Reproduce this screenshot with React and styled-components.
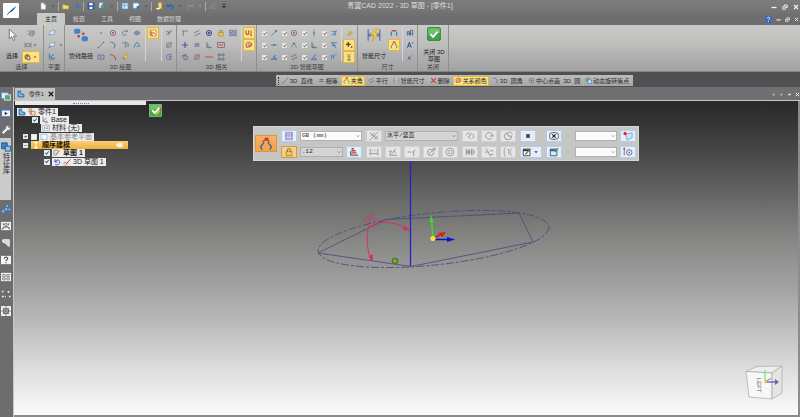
import { useState } from "react";
import styled, { createGlobalStyle } from "styled-components";

const GlobalStyle = createGlobalStyle`
  * {
    box-sizing: border-box;
  }
  body {
    margin: 0;
    background: #707072;
    font-family: "Liberation Sans", "Noto Sans CJK SC", sans-serif;
    font-size: 6px;
    line-height: 8px;
    color: #2c2c2c;
  }
  button,
  input,
  select {
    font: inherit;
    color: inherit;
    margin: 0;
    padding: 0;
  }
  button {
    border: 0;
    background: transparent;
    cursor: pointer;
    white-space: nowrap;
  }
`;

const navy = "#4a5c9c";
const blue = "#2f74c0";
const red = "#c8382c";
const gray = "#6c6c70";
const off = "#8a8a8a";

// every icon is drawn on a 12 x 12 grid
const icons = {
  caret: <path d="M3.5 5h5L6 8z" fill="#444" stroke="none" />,
  caretLight: <path d="M3.5 5h5L6 8z" fill="#aaa" stroke="none" />,
  navLeft: <path d="M8 1.5v9L3 6z" fill="#b8b8b8" stroke="none" />,
  navRight: <path d="M4 1.5v9L9 6z" fill="#b8b8b8" stroke="none" />,
  navDown: <path d="M1.5 4h9L6 9z" fill="#e8e8e8" stroke="none" />,
  chevron: <path d="M3 4.5l3 3 3-3" stroke="#555" />,
  more: (
    <>
      <path d="M3 3.5h6" stroke="#222" />
      <path d="M3 6h6L6 9z" fill="#222" stroke="none" />
    </>
  ),
  feather: (
    <>
      <path d="M1 11C3 7 7 4 11 1 9.5 5 7 7.5 4 8.2z" fill={blue} stroke="none" />
      <path d="M1 11l5-5" stroke="#123f7a" strokeWidth=".6" />
    </>
  ),
  page: <path d="M3 1.5h4.5L10 4v7H3zM7.5 1.5V4H10" fill="#fff" stroke="#9fb8d8" />,
  folder: (
    <>
      <path d="M1 4h3l1 1h5v5.5H1z" fill="#f3d878" stroke="#c59a32" />
      <path d="M5 3c2-2 4-1 5 1M10 1.5V4H7.5" stroke="#3b9b38" />
    </>
  ),
  share: <path d="M3 6h3l3-3M6 6l3 3" stroke={blue} strokeWidth="1.8" />,
  save: (
    <>
      <path d="M1.5 1.5h9v9h-9z" fill="#3668c4" stroke="#2c4b96" />
      <path d="M3.5 1.5h5V5h-5zM4 7.5h4v3H4z" fill="#fff" stroke="none" />
    </>
  ),
  copy: (
    <>
      <path d="M1.5 1h6v8h-6z" fill="#e6effa" stroke="#6c93cc" />
      <circle cx="8" cy="7" r="3" fill="#58a15a" stroke="#2f74c0" />
    </>
  ),
  layout: (
    <>
      <path d="M1.5 1.5h9v9h-9z" fill="#d8eafb" stroke="#5c93d0" />
      <path d="M1.5 5h9M5 1.5v9" stroke="#5c93d0" />
    </>
  ),
  screen: (
    <>
      <path d="M1.5 1.5h9v8h-9z" fill="#f1f8ff" stroke="#5c93d0" />
      <path d="M7 6h4v5H7z" fill={blue} stroke="none" />
    </>
  ),
  brush: (
    <>
      <path d="M5 1h5v9H5z" fill="#f6dd7c" stroke="#cba53c" />
      <path d="M2 10h5" stroke="#fff" strokeWidth="2" />
    </>
  ),
  undo: (
    <>
      <path d="M9 11c3-5-1-8-5-5" stroke="#2b68bd" strokeWidth="2.4" />
      <path d="M1 2v6h6z" fill="#2b68bd" stroke="none" />
    </>
  ),
  redo: (
    <>
      <path d="M3 11C0 6 4 3 8 6" stroke="#8d8d8f" strokeWidth="2" />
      <path d="M11 2v6H5z" fill="#8d8d8f" stroke="none" />
    </>
  ),
  pen: <path d="M2 10l2-5 4-3 2 2-3 4zM6 10h4" stroke="#949496" />,
  minimize: <path d="M1 7h10" stroke="#f4f4f4" strokeWidth="2.6" />,
  restore: <path d="M1.5 5.5h5.5v5H1.500zM4.5 4.500V2h6v5H8" stroke="#f4f4f4" strokeWidth="1.8" />,
  close: <path d="M2 2l8 8M10 2l-8 8" stroke="#f4f4f4" strokeWidth="2.2" />,
  closeDark: <path d="M1.5 1.5l9 9M10.5 1.5l-9 9" stroke="#161616" strokeWidth="2.4" />,
  help: (
    <>
      <path d="M1 0h10v12H1z" fill="#2f6bc4" stroke="none" />
      <path d="M4 4c0-2.5 4.500-2.500 4 0-.2 1.500-2 1.500-2 3.200M6 9v1.400" stroke="#fff" strokeWidth="1.5" />
    </>
  ),
  cursor: (
    <path d="M3 1v9l2.200-2 1.600 3.500 1.500-.7L6.700 7.500h3z" fill="#fff" stroke="#666" strokeWidth=".8" />
  ),
  frame: <path d="M1 3h8v5H4M1 8h3V5h5M4 10.500h5l2-3V3H9" stroke={gray} />,
  extent: <path d="M1.500 2v8M10.500 2v8M1.500 6H4m0-2h5v4H4z" stroke={gray} />,
  pick: (
    <>
      <path d="M1.500 4l3-2 4 2v5l-3 1-4-2z" fill="#c98f5a" stroke="#6f4420" />
      <path d="M5 4v6l2-1 1 2 1-.5-1-2h2z" fill="#fff" stroke="#333" strokeWidth=".7" />
    </>
  ),
  plane: <path d="M1.500 9l2-6 7-1-2 6z" fill="#dcebfa" stroke="#5f93cc" />,
  planeRed: (
    <>
      <path d="M1.500 8l2-5 7-1-2 6z" fill="#dcebfa" stroke="#5f93cc" />
      <path d="M1 10.500l4-3" stroke={red} />
    </>
  ),
  axes: (
    <>
      <path d="M2 1v8l3 2M2 5h3M9 2L5 5v3h6" stroke={blue} strokeWidth="1.3" />
      <path d="M5 8l4 3" stroke={red} />
    </>
  ),
  pipe: (
    <>
      <path d="M3 3.500h4.500v3h-3V9H9" stroke="#b9c0c9" strokeWidth="1.800" />
      <rect x=".5" y="1" width="4.5" height="3.5" rx="1" fill="#3f86d6" stroke="#1e5ea8" strokeWidth=".5" />
      <rect x="7" y="7.5" width="4.5" height="3.5" rx="1" fill="#3f86d6" stroke="#1e5ea8" strokeWidth=".5" />
      <circle cx="4" cy="7" r="1.1" fill={red} stroke="none" />
      <circle cx="8" cy="5" r="1.1" fill={red} stroke="none" />
    </>
  ),
  point: <circle cx="6" cy="6" r="1.2" fill={navy} stroke="none" />,
  circle: (
    <>
      <circle cx="6" cy="6" r="4" />
      <circle cx="6" cy="6" r="1.4" fill={red} stroke="none" />
    </>
  ),
  hook: <path d="M10 3H5C1 3 1 9 5 9h3M8 1.500L10 3 8 5" />,
  mirror: <path d="M6 2v8M4.500 3.500L1.500 6l3 2.500zM7.500 3.500l3 2.500-3 2.500z" />,
  line: (
    <>
      <path d="M2.500 9.500l7-7" stroke={red} />
      <path d="M1.500 10.500l1-1M9.500 2.500l1-1" stroke={navy} strokeWidth="2" />
    </>
  ),
  arc: <path d="M2 2c6-1 9 4 5 9" strokeWidth="1.200" />,
  arcs: <path d="M2 3c4-1 7 3 4 7M6 2c5 0 6 5 4 7" strokeWidth="1.200" />,
  curve: (
    <>
      <path d="M1.500 10c2-7 4-9 6-7 2 2 1 5 3 6" stroke={blue} strokeWidth="1.300" />
      <path d="M4 8h5" stroke="#58a15a" strokeWidth="1.300" />
    </>
  ),
  rect: (
    <>
      <path d="M1.500 3h9v6h-9z" />
      <circle cx="6" cy="6" r="1.2" fill={red} stroke="none" />
    </>
  ),
  arcRed: <path d="M2 2.500c5 0 7 3 8 8" stroke={red} strokeWidth="1.500" />,
  bulb: (
    <>
      <path d="M4 9l1-5 4-2 1 3-4 4z" fill="#f2cf5b" stroke="#a98522" />
      <path d="M2 7l3 3" stroke="#555" />
    </>
  ),
  sketch: (
    <>
      <path d="M1.500 1.500h9v9h-9z" fill="#fff3d0" stroke="#b86a2c" />
      <path d="M3 3v6h3M3 6h3M6 4l3 4" stroke={red} strokeWidth="1.300" />
    </>
  ),
  trim: <path d="M2 9l8-6M2 4h3l2 5M8 2v3" stroke="#555a70" />,
  noCircle: (
    <>
      <circle cx="6" cy="6" r="3.500" />
      <path d="M1.500 10.500l9-9" stroke={red} />
    </>
  ),
  offset: <path d="M10 2.500H5c-4 0-4 7 0 7h5M10 5H6.500v2H10" />,
  corner: <path d="M3.500 10V3H10M1.500 3h2" />,
  parallel: <path d="M1.500 6l8-4M3 10l8-4" stroke="#555a70" />,
  target: (
    <>
      <circle cx="6" cy="6" r="4" strokeWidth="1.500" />
      <circle cx="6" cy="6" r="1.800" fill={navy} />
    </>
  ),
  lock: (
    <>
      <path d="M4 6V4c0-2.500 4-2.500 4 0v2" stroke="#8a7440" strokeWidth="1.300" />
      <path d="M2.500 5.500h7v5h-7z" fill="#efc95a" stroke="#a8842c" />
    </>
  ),
  grid: <path d="M1 2h4v3H1zM7 2h4v3H7zM1 7h4v3H1zM7 7h4v3H7z" />,
  plus: <path d="M6 1.500v9M1.500 6h9" strokeWidth="1.800" />,
  equal: <path d="M2.500 4.500h7M2.500 7.500h7" strokeWidth="1.500" />,
  perp: (
    <>
      <path d="M3 2v8h7" stroke="#444" />
      <path d="M3 6c2 0 4 2 4 4" stroke={blue} />
    </>
  ),
  group: (
    <>
      <path d="M1 2.500h10v7H1z" stroke="#5a3d3d" fill="#d8c8c8" />
      <path d="M3 6h6" stroke={red} strokeWidth="1.500" />
    </>
  ),
  tangent: (
    <>
      <circle cx="7" cy="7" r="3.200" />
      <path d="M1 5l7-3" stroke="#444" />
      <circle cx="7" cy="7" r="1.200" fill="#58a15a" stroke="none" />
    </>
  ),
  dash: <path d="M0 6h12" stroke={red} strokeWidth="1.300" />,
  linked: (
    <>
      <path d="M2 1.500h3v3H2zM7.500 7.500h3v3h-3zM2 7.500h3v3H2zM7.500 1.500h3v3h-3z" />
      <path d="M4.500 6h4" stroke="#e2b72d" strokeWidth="2.500" />
    </>
  ),
  magnet: (
    <>
      <path d="M1.500 2v6h4V2" stroke="#a5501e" strokeWidth="1.500" />
      <path d="M9 2v7M7.500 9.500h3" stroke={red} strokeWidth="1.300" />
    </>
  ),
  relation: (
    <>
      <path d="M2 9.500V4c0-2 6-3 8 0 1 3-2 5-5 5z" stroke={red} strokeWidth="1.300" />
      <circle cx="6.500" cy="6" r="1.800" stroke={navy} />
    </>
  ),
  diag: (
    <>
      <path d="M2 10l6-6" stroke={blue} />
      <path d="M8 4l2-2" stroke={blue} strokeWidth="2.500" />
    </>
  ),
  vert: (
    <>
      <path d="M6 1v10" stroke={blue} />
      <circle cx="6" cy="6" r="1.300" fill={blue} stroke="none" />
    </>
  ),
  cross: <path d="M2 10l8-8M2 4c4-2 8 0 6 6M6 4h4M4 8h5" stroke={blue} />,
  horiz: (
    <>
      <path d="M1 6h10" stroke={blue} />
      <circle cx="6" cy="6" r="1.500" fill={blue} stroke="none" />
    </>
  ),
  peak: (
    <>
      <path d="M2 9.500c2 0 2-6 4-6s2 6 4 6" stroke={blue} />
      <circle cx="6" cy="3.500" r="1.300" fill={red} stroke="none" />
    </>
  ),
  tee: <path d="M1.500 2.500h9M3 3c0 3 2 4 6 4M6 3v4l3 4M3 7h3" stroke={blue} />,
  slope: <path d="M1.500 9.500h9M4 8l5-5M6 4v4h4" stroke={blue} strokeWidth="1.300" />,
  angle: <path d="M9 2L2 10h8M6 6c2 0 2 2 2 4" stroke={blue} strokeWidth="1.300" />,
  wave: <path d="M2 9.500V4c2-2 4-1 3 4 2-6 4-6 5-6" stroke={blue} />,
  dots: (
    <>
      <circle cx="4" cy="4" r="1.700" fill="#e2d534" stroke="none" />
      <circle cx="8.500" cy="6" r="2" fill="#e2d534" stroke="#98922a" />
      <path d="M4 8l3 2" stroke={navy} />
    </>
  ),
  plusDot: <path d="M5 1.500v7M1.500 5h7M9 9h2" stroke="#5a3b10" strokeWidth="1.900" />,
  spark: (
    <>
      <path d="M6 5v5M3 10.500h6" stroke="#58852a" strokeWidth="1.400" />
      <path d="M3 1.500l6 5M9 1.500l-6 5" stroke="#c0602c" />
    </>
  ),
  smart: (
    <>
      <path
        d="M1 1v10M11 1v10M1 6h10M3 4.500L1 6l2 1.500M9 4.500L11 6 9 7.500"
        stroke={navy}
        strokeWidth=".8"
      />
      <path
        d="M7 0L3.500 6H6l-1.500 6L9 4.500H6.500L9 0z"
        fill="#f4d533"
        stroke="#b8952a"
        strokeWidth=".4"
      />
    </>
  ),
  dim: (
    <>
      <path d="M2 10V4M10 10V4" stroke={blue} strokeWidth="1.600" />
      <path d="M2.500 2.500h7M6 1.500v3" stroke={red} strokeWidth="1.500" />
    </>
  ),
  angleDim: (
    <>
      <path d="M2.500 11L1.500 8l3-3.500M9.500 11l1-3-3-3.500" stroke="#3f6f90" strokeWidth="1.300" />
      <path d="M3 4c2-2 4-2 6 0" stroke={red} />
      <path d="M5 .8l3 2M8 .8l-3 2" stroke={red} strokeWidth="1.200" />
    </>
  ),
  aChart: <path d="M2 10V4h3v6M6.500 10V2h3.500v8M2 7h8" stroke={navy} strokeWidth="1.300" />,
  aBig: <path d="M2 10l3-8 3 8M3 7.500h4M9 3h2" stroke="#2459a6" strokeWidth="1.500" />,
  aSmall: <path d="M3 10l2-5 2 5M4 8.500h2M8.500 4.500H10" stroke="#2459a6" />,
  check: (
    <>
      <rect x=".5" y=".5" width="11" height="11" rx="1" fill="#3fa545" stroke="#1d7427" strokeWidth=".6" />
      <path d="M1 1h10v4c-4 0-6 2-10 2z" fill="#8ed48c" fillOpacity=".6" stroke="none" />
      <path d="M3 6.200l2.200 2.200L9.200 4" stroke="#fff" strokeWidth="1.600" />
    </>
  ),
  checkPen: (
    <>
      <rect x=".5" y=".5" width="11" height="11" fill="#48a944" stroke="#9bd696" strokeWidth=".6" />
      <path d="M1 1h10v3c-4 0-6 2-10 2z" fill="#8ed48c" fillOpacity=".6" stroke="none" />
      <path d="M3 6l2.300 2.300L9.500 3.500" stroke="#fff" strokeWidth="1.700" />
      <path d="M6.500 10l4-4.500" stroke="#f2c14a" strokeWidth="1.200" />
      <path d="M10 6l1-1" stroke="#d33" strokeWidth="1.600" />
    </>
  ),
  erase: <path d="M2 2l8 8M10 2l-8 8" stroke="#e03226" strokeWidth="1.800" />,
  smartSm: (
    <>
      <path d="M2 2v8M10 2v8M2 6h8" stroke="#5b86b4" />
      <path d="M7 1L4 6h2l-1 5 3-6H6z" fill="#e8cf3a" stroke="none" />
    </>
  ),
  orbit: (
    <>
      <circle cx="4.500" cy="4.500" r="3" fill="#7fb957" stroke="#3d8c36" />
      <path d="M5 5h6v6H5z" fill="#d9e8f8" stroke={blue} />
    </>
  ),
  part: (
    <>
      <path d="M1.500 1.500h4v4l5 1v4h-9z" fill="#4f9ada" stroke="#1f5f9f" />
      <path d="M4 4v4h4" stroke="#cfe6fa" />
    </>
  ),
  tree: (
    <>
      <path d="M1.500 1.500h4v4h-4zM5 5h5.500v5.500H5z" fill="#f6e4c0" stroke="#a8672b" />
      <path d="M3 5v4h2" stroke={red} />
    </>
  ),
  coord: (
    <>
      <path d="M3 1v7h7" stroke={blue} />
      <path d="M3 8l5-5M6 10h4" stroke={red} />
    </>
  ),
  material: (
    <>
      <path d="M1 2h10v8H1z" fill="#f6fbff" stroke="#6ba2d6" />
      <path d="M3 4h2v4H3z" fill="#e38b2f" stroke="none" />
      <path d="M6.500 4.500h3M6.500 7h3" />
    </>
  ),
  basePlane: <path d="M1.500 2h9v8h-9zM1.500 10l3-3" fill="#f5faff" stroke="#88b3dc" />,
  order: <path d="M6 1v10M4 3l2-2 2 2M4 9l2 2 2-2" stroke="#fff8dc" strokeWidth="1.600" />,
  pencil: (
    <>
      <path d="M1.500 10V2h6" stroke={blue} />
      <path d="M4 9l6-7" stroke="#e38b2f" strokeWidth="2" />
      <path d="M3 10l2-2" stroke={red} />
    </>
  ),
  loop: <path d="M3 2v4h4M3 6c2-5 8-3 7 1-1 4-5 4-7 2" stroke="#3a50c8" strokeWidth="1.400" />,
  sketch3d: (
    <>
      <path d="M1 9c3-7 4 2 6-3" stroke={red} />
      <path d="M5 9l6-7" stroke="#333" />
      <path d="M1 10.500h6" stroke="#e38b2f" />
    </>
  ),
  tag: <path d="M1 6l4-3h6v6H5z" fill="#fff6dc" stroke="#f8e8b8" />,
  panelLib: (
    <>
      <path d="M.5 2h8v7h-8z" fill="#e6f2fc" stroke="#5b96cc" />
      <path d="M4 4.500h7.500V11H4z" fill="#5ca86e" stroke="#e6f2fc" />
    </>
  ),
  panelPlay: (
    <>
      <path d="M.5 1.500h11v9H.5z" fill="#eef5fc" stroke="#2f5f9c" />
      <path d="M.5 2.500h11" stroke="#2f5f9c" />
      <path d="M4.500 4.500l3.500 2-3.500 2z" fill="#222" stroke="none" />
    </>
  ),
  wrench: (
    <>
      <path d="M2 10l6-6" stroke="#f2f2f2" strokeWidth="2.600" />
      <circle cx="8.500" cy="3.500" r="2.600" fill="#f2f2f2" stroke="none" />
      <path d="M8.500 3.500l3-3" stroke="#6d6d6f" strokeWidth="1.400" />
    </>
  ),
  feature: (
    <>
      <path d="M.5 1h7v7h-7z" fill="#3f80c4" stroke="#1c4f8c" />
      <path d="M5 5h6.500v6H5z" fill="#8fc0ec" stroke="#1c4f8c" />
    </>
  ),
  cubes: (
    <path
      d="M1 7h3.500v3.500H1zM4.500 4.500H8V8H4.500zM6 1h3v3H6zM8.500 5h3v3h-3z"
      fill="#8fc6f4"
      stroke="#2c70b8"
      strokeWidth=".8"
    />
  ),
  users: (
    <>
      <path d="M0 1h12v10H0z" fill="#f2f2f2" stroke="none" />
      <path d="M1 10l3-3h4l3 3M2 3l2 2M10 3L8 5" stroke={gray} strokeWidth="1.500" />
      <circle cx="6" cy="4" r="1.500" stroke={gray} />
    </>
  ),
  curveSurf: <path d="M2 2h8v8C7 10 6 5 2 5z" fill="#d8d8d8" stroke="#f2f2f2" />,
  question: (
    <>
      <path d="M0 1h12v10H0z" fill="#f4f4f4" stroke="none" />
      <path d="M4 4.500c0-2.500 4.500-2.500 4 0-.2 1.300-2 1.300-2 3M6 8.700V10" stroke="#555" strokeWidth="1.400" />
    </>
  ),
  tiles: (
    <>
      <path d="M0 1h12v10H0z" fill="#f4f4f4" stroke="none" />
      <path d="M2 3h3v2.500H2zM7 3h3v2.500H7zM2 7h3v2.500H2zM7 7h3v2.500H7z" stroke="#777" />
    </>
  ),
  sparse: <path d="M1 3h2M8 3.500h2M1 9h2.500M9.500 9h2M5 9h1" stroke="#f2f2f2" strokeWidth="2" />,
  gear: (
    <>
      <path d="M0 0h12v12H0z" fill="#f0f0f0" stroke="none" />
      <circle cx="6" cy="6" r="3" stroke="#555" strokeWidth="1.400" />
      <path d="M6 0v12M0 6h12M2 2l8 8M10 2l-8 8" stroke="#777" />
    </>
  ),
  swatch: (
    <>
      <path d="M2 1.500h8v9H2z" fill="#7f9ff0" stroke="#8f8fd8" />
      <path d="M2 4.500h8" stroke="#f08080" strokeWidth="1.500" />
      <path d="M2 7.500h8M4.700 1.500v9M7.400 1.500v9" stroke="#e8d8f0" />
    </>
  ),
  layers: (
    <>
      <path d="M3 2h3M3 4.500h5M3 7h6" stroke="#c03a40" strokeWidth="1.700" />
      <path d="M2 9.800h9M2 5v5" stroke="#5a3a4a" strokeWidth="1.200" />
    </>
  ),
  hatch: <path d="M1 11L11 1M1 2l10 8M2 6l5-4M6 10l5-4" stroke={off} />,
  span: <path d="M1.500 2v8M10.500 2v8M1.500 8h9M4 4h1M7 4h1" stroke={off} />,
  angleGray: <path d="M1 5h3l-2 5h9M5 8l4-6M7 5l3 2" stroke={off} />,
  dimGray: <path d="M1 6h3M6 6h2l2-3M8 6v5M4 6h1" stroke={off} />,
  circGray: (
    <>
      <circle cx="5.500" cy="6.500" r="3.700" stroke={off} />
      <path d="M4 8l6-6M8 1.500h3v3" stroke={off} />
    </>
  ),
  ringGray: (
    <>
      <circle cx="6" cy="6" r="4.800" stroke="#999" />
      <circle cx="6" cy="6" r="2.300" stroke="#999" />
    </>
  ),
  zigGray: <path d="M1 5l3-3 3 3-3 2M7 2l4 4-2 3M4 7l3 3" stroke={off} />,
  arcGray: <path d="M9 9.500c-8 2-9-7-3-7.500 3 0 4 2 4 4M7 6h5" stroke={off} />,
  pieGray: <path d="M6 2a4.300 4.300 0 1 0 4.300 4H6zM7.500 1c2 0 3 1 3.500 3" stroke={off} />,
  symGray: <path d="M1.500 2v8M3.500 3.500h2v5h-2zM8 2.500c4 1 4 6 0 7M8 2v8M1 6h10" stroke={off} />,
  linesGray: <path d="M2 1.500l3 4M1 6h4l3 5M7 4.500h4M8 9h3" stroke={off} />,
  frameGray: <path d="M3 1.500H1.500v9H3M5 3h2v6M11 2c-2 0-3 2-2 4-1 2 0 4 2 4" stroke="#999" />,
  xSmall: <path d="M4 4l4 4M8 4L4 8" stroke="#222" strokeWidth="1.600" />,
  xPill: (
    <>
      <rect x=".5" y="2" width="11" height="8" rx="3.500" stroke="#444" />
      <path d="M4 4l4 4M8 4L4 8" stroke="#222" strokeWidth="1.400" />
    </>
  ),
  tablePen: (
    <>
      <path d="M1.500 2.500h8v8h-8z" fill="#fff" stroke="#1f2d52" />
      <path d="M1.500 4h8" stroke="#1f2d52" strokeWidth="2" />
      <path d="M4 9l6-7" stroke="#6d7a1e" strokeWidth="1.600" />
    </>
  ),
  tableOk: (
    <>
      <path d="M1.500 2.500h8v8h-8z" fill="#dbe8f8" stroke="#1f4a7a" />
      <path d="M1.500 4h8" stroke="#1f4a7a" strokeWidth="2" />
      <path d="M6 3.500l1.500 2L11 1.500" stroke="#41a636" strokeWidth="1.500" />
    </>
  ),
  flagPlane: (
    <>
      <path d="M3 4l8-2v6l-6 3z" fill="#cfe3f6" stroke="#6fa0d0" />
      <circle cx="2.500" cy="3" r="2" fill="#e8281e" stroke="none" />
    </>
  ),
  origin: (
    <>
      <path d="M1.500 3v7" stroke={navy} />
      <circle cx="7.500" cy="6.500" r="3.300" />
      <circle cx="7.500" cy="6.500" r="1" fill={red} stroke="none" />
      <circle cx="1.500" cy="2" r="1.200" fill={red} stroke="none" />
    </>
  ),
};

const IconSvg = styled.svg`
  display: block;
  flex: none;
  width: ${({ $size }) => $size}px;
  height: ${({ $size }) => $size}px;
  fill: none;
  stroke: ${navy};
`;

const Icon = ({ name, size = 8 }) => (
  <IconSvg viewBox="0 0 12 12" $size={size} aria-hidden="true">
    {icons[name]}
  </IconSvg>
);

const Window = styled.div`
  display: flex;
  flex-direction: column;
  min-height: 100vh;
`;

/* ---------- header ---------- */
const Header = styled.header`
  display: grid;
  grid-template-columns: 1fr auto 1fr;
  height: 25px;
  background: linear-gradient(#7c7c7c, #767673 40%, #6f6f72 60%, #6c6c6f);
`;
const HeaderLeft = styled.div`
  display: flex;
`;
const Logo = styled.div`
  width: 16px;
  height: 15px;
  margin: 3px 18px 0 3px;
  border-radius: 1px;
  background: #fff;
  display: flex;
  align-items: center;
  justify-content: center;
`;
const HeaderRows = styled.div`
  display: grid;
  grid-template-rows: 13px 12px;
`;
const QuickBar = styled.div`
  display: flex;
  align-items: center;
  height: 12px;
`;
const QuickButton = styled.button`
  display: flex;
  justify-content: center;
  width: ${({ $narrow }) => ($narrow ? 9 : 11)}px;
`;
const QuickDivider = styled.i`
  width: 1px;
  height: 9px;
  margin: 0 1px;
  background: #a9a9a9;
`;
const Tabs = styled.nav`
  display: flex;
`;
const Tab = styled.button`
  padding: 0 8px;
  border-radius: 1px 1px 0 0;
  color: ${({ $active }) => ($active ? "#1c1c1c" : "#d6d6d6")};
  background: ${({ $active }) => ($active ? "#c9c9c7" : "transparent")};
`;
const Title = styled.h1`
  margin: 0;
  padding-top: 2px;
  font-size: 7px;
  font-weight: 400;
  color: #dedede;
`;
const Controls = styled.div`
  display: flex;
  justify-content: flex-end;
  align-items: center;
  gap: ${({ $gap }) => $gap}px;
  padding-right: 1px;
`;

/* ---------- ribbon ---------- */
const Ribbon = styled.section`
  display: flex;
  height: 47px;
  border-bottom: 1px solid #858585;
  background: linear-gradient(#c9c9c7, #bdbdbb 45%, #b3b3b5 60%, #a2a2a2);
`;
const Group = styled.div`
  display: flex;
  flex-direction: column;
  justify-content: space-between;
  width: ${({ $width }) => $width}px;
  padding-top: 2px;
  border-right: 1px solid #8f8f8f;
`;
const GroupBody = styled.div`
  display: flex;
  height: 36px;
  padding-left: 2px;
`;
const GroupLabel = styled.div`
  text-align: center;
  color: #3c3c3c;
`;
const BigButton = styled.button`
  display: flex;
  flex-direction: column;
  justify-content: space-between;
  align-items: center;
  width: ${({ $width = 28 }) => $width}px;
  height: ${({ $tall }) => ($tall ? 36 : 33)}px;
  padding-top: ${({ $tall }) => ($tall ? 0 : 1)}px;
  line-height: ${({ $tall }) => ($tall ? 7 : 8)}px;
  color: #222;
`;
const ToolGrid = styled.div`
  display: grid;
  grid-auto-flow: column;
  grid-template-rows: repeat(3, 12px);
  grid-auto-columns: ${({ $col = 12 }) => $col}px;
`;
const Tool = styled.button`
  display: flex;
  align-items: center;
  justify-content: center;
  height: 12px;
  border: 1px solid ${({ $on }) => ($on ? "#dfb945" : "transparent")};
  background: ${({ $on }) => ($on ? "#fbe085" : "transparent")};
`;
const Divider = styled.i`
  width: 1px;
  height: 34px;
  margin: 0 1px 0 2px;
  background: #d6d6d6;
`;
const CheckTool = styled.label`
  display: flex;
  align-items: center;
  gap: 3px;
  padding-left: 3px;
`;
const Check = styled.input`
  appearance: none;
  flex: none;
  display: grid;
  place-items: center;
  width: ${({ $size = 5 }) => $size}px;
  height: ${({ $size = 5 }) => $size}px;
  border: 1px solid #e4e4e4;
  background: #f4f4f4;
  &:checked::before {
    content: "";
    width: 4px;
    height: 4px;
    background: ${({ $dark }) => ($dark ? "#1f4e9c" : "#777")};
    clip-path: polygon(0 50%, 20% 35%, 40% 60%, 85% 0, 100% 20%, 40% 100%);
  }
`;

/* ---------- command strip ---------- */
const CommandRow = styled.div`
  display: flex;
  justify-content: center;
  height: 15px;
  padding: 3px 0 1px 109px;
  background: #505052;
`;
const CommandBar = styled.div`
  display: flex;
  align-items: center;
  gap: 1px;
  padding: 0 2px;
  background: linear-gradient(#bcbcbc, #a6a6a6);
`;
const Grip = styled.i`
  height: 8px;
  border-left: 1px dotted #333;
`;
const Command = styled.button`
  display: flex;
  align-items: center;
  gap: 1px;
  height: 10px;
  padding: 0 1px;
  white-space: pre;
  border: 1px solid ${({ $on }) => ($on ? "#dfb945" : "transparent")};
  background: ${({ $on }) => ($on ? "#fbe085" : "transparent")};
`;

/* ---------- workspace ---------- */
const Workspace = styled.div`
  display: flex;
  flex: 1;
`;
const Sidebar = styled.aside`
  display: flex;
  flex-direction: column;
  width: 14px;
  background: #6d6d6f;
  border-right: 1px solid #c6c6c6;
`;
const SideButton = styled.button`
  display: flex;
  flex-direction: column;
  align-items: center;
  justify-content: center;
  width: 11px;
  height: 17px;
`;
const SideTab = styled.button`
  display: flex;
  flex-direction: column;
  align-items: center;
  gap: 1px;
  width: 11px;
  height: 62px;
  padding-top: 4px;
  background: #cbcbca;
`;
const SideText = styled.span`
  writing-mode: vertical-rl;
  font-size: 7px;
`;
const Main = styled.main`
  display: flex;
  flex: 1;
  flex-direction: column;
  min-width: 0;
`;
const DocRow = styled.div`
  display: flex;
  justify-content: space-between;
  align-items: flex-end;
  height: 14px;
  padding-left: 1px;
  background: #707072;
  border-bottom: 1px solid #c6c6c6;
`;
const DocTab = styled.div`
  display: flex;
  align-items: center;
  justify-content: space-between;
  width: 40px;
  height: 12px;
  padding: 0 1px 0 2px;
  background: #c2c2c1;
`;
const DocNav = styled.div`
  display: flex;
  align-items: center;
  gap: 3px;
  height: 12px;
`;
const Canvas = styled.div`
  position: relative;
  flex: 1;
  border-right: 2px solid #8c8c8c;
  border-bottom: 2px solid #8c8c8c;
  background: linear-gradient(
    #29292b,
    #363636 8%,
    #545454 22%,
    #787877 38%,
    #8e8e8d 48%,
    #a3a3a3 60%,
    #bdbdbd 72%,
    #dadada 84%,
    #fbfbfb
  );
`;
const Scene = styled.svg`
  position: absolute;
  inset: 0;
  width: 100%;
  height: 100%;
  fill: none;
`;
const FinishButton = styled.button`
  position: absolute;
  left: 135px;
  top: 3px;
`;

/* ---------- feature tree ---------- */
const TreePanel = styled.div`
  position: absolute;
  left: 1px;
  top: 0;
  width: 131px;
`;
const TreeHandle = styled.div`
  display: flex;
  justify-content: center;
  align-items: center;
  height: 4px;
  margin-bottom: 2px;
  background: #e8e8e8;
`;
const HandleDots = styled.i`
  width: 16px;
  border-top: 1px dotted #4c86cc;
`;
const TreeRow = styled.div`
  display: flex;
  align-items: center;
  gap: 2px;
  height: ${({ $tall }) => ($tall ? 9 : 8)}px;
  padding-left: ${({ $indent }) => $indent}px;
  font-size: 7px;
`;
const TreeLabel = styled.span`
  display: flex;
  align-items: center;
  gap: 2px;
  height: 8px;
  padding: 0 2px 0 1px;
  white-space: nowrap;
  background: #ececec;
  color: ${({ $dim }) => ($dim ? "#8a8a8a" : "#1c1c1c")};
  font-weight: ${({ $bold }) => ($bold ? 700 : 400)};
`;
const TreeSection = styled(TreeLabel)`
  width: 97px;
  color: #201400;
  background: linear-gradient(#f9cf75, #eeb03c);
`;
const SectionTag = styled.span`
  margin-left: auto;
  padding-right: 3px;
`;
const Expander = styled.button`
  display: grid;
  place-items: center;
  width: 5px;
  height: 5px;
  margin-right: 1px;
  background: #e8e8e8;
  line-height: 5px;
  font-size: 6px;
  color: #222;
`;

/* ---------- floating dimension bar ---------- */
const DimBar = styled.div`
  position: absolute;
  left: 239px;
  top: 25px;
  display: flex;
  align-items: center;
  gap: 4px;
  height: 35px;
  padding: 0 2px 0 1px;
  background: #c6c6c5;
  border: 1px solid #d6d6d6;
`;
const DimRows = styled.div`
  display: grid;
  grid-template-rows: 12px 12px;
  gap: 4px;
`;
const DimRow = styled.div`
  display: flex;
  align-items: center;
  gap: 3px;
`;
const tones = {
  light: ["#e4effa", "#b5cde6"],
  off: ["#e6e6e6", "#d0d0d0"],
  hot: ["#f7cd8c", "#d69a46"],
};
const DimButton = styled.button`
  display: flex;
  align-items: center;
  justify-content: center;
  width: ${({ $wide }) => ($wide ? 22 : 16)}px;
  height: 12px;
  background: ${({ $tone }) => tones[$tone][0]};
  border: 1px solid ${({ $tone }) => tones[$tone][1]};
`;
const DimMain = styled(DimButton)`
  height: 17px;
  background: linear-gradient(#f8b265, #f3a04c);
`;
const SelectBox = styled.span`
  position: relative;
  display: block;
  width: ${({ $width }) => $width}px;
  height: 10px;
`;
const Select = styled.select`
  display: block;
  appearance: none;
  width: 100%;
  height: 10px;
  padding: 0 1px;
  border: 1px solid #b0b0b0;
  border-radius: 0;
  background: ${({ $white }) => ($white ? "#fbfbfb" : "#d4d4d3")};
  font-family: "Liberation Mono", "Noto Sans CJK SC", monospace;
`;
const SelectArrow = styled.span`
  position: absolute;
  right: 1px;
  top: 2px;
  pointer-events: none;
`;

const quickItems = [
  "page", "caret", "|", "folder", "share", "|", "save", "copy", "caret", "|",
  "layout", "screen", "caret", "|", "brush", "undo", "caret", "redo",
  "caretLight", "|", "pen", "more",
];
const tabs = ["主页", "检查", "工具", "视图", "数据管理"];
const drawTools = [
  "point", "line", "rect", "circle", "arc", "arcRed",
  "hook", "arcs", "bulb", "mirror", "curve",
];
const relationTools = [
  "corner", "plus", "tangent", "parallel", "equal", "noCircle",
  "target", "perp", "dash", "lock", "group", "linked", "grid",
];
const snapTools = [
  "diag", "horiz", "slope", "circle", "peak", "parallel",
  "vert", "perp", "angle", "cross", "tee", "wave",
];
const commands = [
  { icon: "line", text: "3D  直线" },
  { icon: "equal", text: "相等" },
  { icon: "angleDim", text: "夹角", on: true },
  { icon: "parallel", text: "平行" },
  { icon: "smartSm", text: "智能尺寸" },
  { icon: "erase", text: "删除" },
  { icon: "relation", text: "关系颜色", on: true },
  { icon: "arc", text: "3D  圆角" },
  { icon: "circle", text: "中心点画  3D  圆" },
  { icon: "orbit", text: "动态旋转焦点" },
];
const sideTop = ["panelLib", "panelPlay", "wrench"];
const sideBottom = ["cubes", "users", "curveSurf", "question", "tiles", "sparse", "gear"];

const ToolButtons = ({ names, on = [] }) =>
  names.map((name) => (
    <Tool key={name} aria-label={name} $on={on.includes(name)}>
      <Icon name={name} />
    </Tool>
  ));

const DropDown = ({ label, width, options, white }) => (
  <SelectBox $width={width}>
    <Select aria-label={label} $white={white}>
      {options.map((option) => (
        <option key={option}>{option}</option>
      ))}
    </Select>
    <SelectArrow>
      <Icon name="chevron" size={6} />
    </SelectArrow>
  </SelectBox>
);

const DimButtons = ({ names, tone = "off" }) =>
  names.map((name) => (
    <DimButton key={name} $tone={tone} aria-label={name}>
      <Icon name={name} size={10} />
    </DimButton>
  ));

const TopBar = () => {
  const [active, setActive] = useState("主页");
  return (
    <Header>
      <HeaderLeft>
        <Logo>
          <Icon name="feather" size={11} />
        </Logo>
        <HeaderRows>
          <QuickBar>
            {quickItems.map((name, i) =>
              name === "|" ? (
                <QuickDivider key={i} />
              ) : (
                <QuickButton key={i} aria-label={name} $narrow={name.startsWith("caret")}>
                  <Icon name={name} size={name.startsWith("caret") ? 6 : 8} />
                </QuickButton>
              )
            )}
          </QuickBar>
          <Tabs>
            {tabs.map((tab) => (
              <Tab key={tab} $active={tab === active} onClick={() => setActive(tab)}>
                {tab}
              </Tab>
            ))}
          </Tabs>
        </HeaderRows>
      </HeaderLeft>
      <Title>青翼CAD 2022 - 3D 草图 - [零件1]</Title>
      <HeaderRows>
        <Controls $gap={5}>
          {["minimize", "restore", "close"].map((name) => (
            <button key={name} aria-label={name}>
              <Icon name={name} size={6} />
            </button>
          ))}
        </Controls>
        <Controls $gap={4}>
          {["help", "minimize", "restore", "close"].map((name) => (
            <button key={name} aria-label={name}>
              <Icon name={name} size={name === "help" ? 7 : 5} />
            </button>
          ))}
        </Controls>
      </HeaderRows>
    </Header>
  );
};

const RibbonBar = () => (
  <Ribbon>
    <Group $width={44}>
      <GroupBody>
        <BigButton $width={20}>
          <Icon name="cursor" size={13} />
          选择
        </BigButton>
        <ToolGrid $col={18}>
          <Tool aria-label="frame">
            <Icon name="frame" />
          </Tool>
          <Tool aria-label="extent">
            <Icon name="extent" />
            <Icon name="caret" size={6} />
          </Tool>
          <Tool aria-label="pick" $on>
            <Icon name="pick" />
            <Icon name="caret" size={6} />
          </Tool>
        </ToolGrid>
      </GroupBody>
      <GroupLabel>选择</GroupLabel>
    </Group>
    <Group $width={21}>
      <GroupBody>
        <ToolGrid>
          <ToolButtons names={["plane", "planeRed", "axes"]} />
        </ToolGrid>
        <ToolGrid $col={6}>
          <span />
          <Tool aria-label="caret">
            <Icon name="caret" size={6} />
          </Tool>
        </ToolGrid>
      </GroupBody>
      <GroupLabel>平面</GroupLabel>
    </Group>
    <Group $width={112}>
      <GroupBody>
        <BigButton>
          <Icon name="pipe" size={14} />
          管线路径
        </BigButton>
        <ToolGrid>
          <ToolButtons names={drawTools} />
        </ToolGrid>
        <Divider />
        <ToolGrid>
          <ToolButtons names={["sketch"]} on={["sketch"]} />
        </ToolGrid>
        <Divider />
        <ToolGrid>
          <ToolButtons names={["trim", "noCircle", "offset"]} />
        </ToolGrid>
      </GroupBody>
      <GroupLabel>3D 绘图</GroupLabel>
    </Group>
    <Group $width={80}>
      <GroupBody>
        <ToolGrid>
          <ToolButtons names={relationTools} />
        </ToolGrid>
        <Divider />
        <ToolGrid>
          <ToolButtons names={["magnet", "relation"]} on={["magnet", "relation"]} />
        </ToolGrid>
      </GroupBody>
      <GroupLabel>3D 相关</GroupLabel>
    </Group>
    <Group $width={101}>
      <GroupBody>
        <ToolGrid $col={20}>
          {snapTools.map((name) => (
            <CheckTool key={name}>
              <Check type="checkbox" defaultChecked aria-label={name} />
              <Icon name={name} />
            </CheckTool>
          ))}
        </ToolGrid>
        <Divider />
        <ToolGrid>
          <ToolButtons names={["dots", "plusDot", "spark"]} on={["plusDot", "spark"]} />
        </ToolGrid>
      </GroupBody>
      <GroupLabel>3D 智能草图</GroupLabel>
    </Group>
    <Group $width={60}>
      <GroupBody>
        <BigButton>
          <Icon name="smart" size={14} />
          智能尺寸
        </BigButton>
        <ToolGrid>
          <ToolButtons names={["dim", "angleDim"]} on={["angleDim"]} />
        </ToolGrid>
        <Divider />
        <ToolGrid>
          <ToolButtons names={["aChart", "aBig", "aSmall"]} />
        </ToolGrid>
      </GroupBody>
      <GroupLabel>尺寸</GroupLabel>
    </Group>
    <Group $width={31}>
      <GroupBody>
        <BigButton $tall>
          <Icon name="check" size={14} />
          <span>
            关闭 3D
            <br />
            草图
          </span>
        </BigButton>
      </GroupBody>
      <GroupLabel>关闭</GroupLabel>
    </Group>
  </Ribbon>
);

const FeatureTree = () => (
  <TreePanel>
    <TreeHandle>
      <HandleDots />
    </TreeHandle>
    <TreeRow $indent={2} $tall>
      <TreeLabel>
        <Icon name="part" />
        <Icon name="tree" />
        零件1
      </TreeLabel>
    </TreeRow>
    <TreeRow $indent={17}>
      <Check type="checkbox" defaultChecked $size={6} $dark aria-label="Base" />
      <TreeLabel>
        <Icon name="coord" />
        Base
      </TreeLabel>
    </TreeRow>
    <TreeRow $indent={26}>
      <TreeLabel>
        <Icon name="material" />
        材料 (无)
      </TreeLabel>
    </TreeRow>
    <TreeRow $indent={8} $tall>
      <Expander>+</Expander>
      <Check type="checkbox" $size={6} $dark aria-label="基本参考平面" />
      <TreeLabel $dim>
        <Icon name="basePlane" />
        基本参考平面
      </TreeLabel>
    </TreeRow>
    <TreeRow $indent={8}>
      <Expander>−</Expander>
      <TreeSection $bold>
        <Icon name="order" />
        顺序建模
        <SectionTag>
          <Icon name="tag" />
        </SectionTag>
      </TreeSection>
    </TreeRow>
    <TreeRow $indent={29}>
      <Check type="checkbox" defaultChecked $size={6} $dark aria-label="草图 1" />
      <TreeLabel $bold>
        <Icon name="pencil" />
        草图 1
      </TreeLabel>
    </TreeRow>
    <TreeRow $indent={29} $tall>
      <Check type="checkbox" defaultChecked $size={6} $dark aria-label="3D 草图 1" />
      <TreeLabel>
        <Icon name="loop" />
        <Icon name="sketch3d" />
        3D 草图 1
      </TreeLabel>
    </TreeRow>
  </TreePanel>
);

const DimensionBar = () => (
  <DimBar>
    <DimMain $wide $tone="hot" aria-label="angle">
      <Icon name="angleDim" size={14} />
    </DimMain>
    <DimRows>
      <DimRow>
        <DimButtons names={["swatch"]} tone="light" />
        <DropDown label="标准" width={62} options={["GB (mm)"]} white />
      </DimRow>
      <DimRow>
        <DimButtons names={["lock"]} tone="hot" />
        <DropDown label="精度" width={43} options={[".12"]} />
        <DimButtons names={["layers"]} tone="light" />
      </DimRow>
    </DimRows>
    <DimRows>
      <DimRow>
        <DimButtons names={["hatch"]} />
        <DropDown label="方向" width={73} options={["水平/竖直"]} />
      </DimRow>
      <DimRow>
        <DimButtons names={["span", "angleGray", "dimGray", "circGray", "ringGray"]} />
      </DimRow>
    </DimRows>
    <DimRows>
      <DimRow>
        <DimButtons names={["zigGray", "arcGray", "pieGray"]} />
      </DimRow>
      <DimRow>
        <DimButtons names={["symGray", "linesGray", "frameGray"]} />
      </DimRow>
    </DimRows>
    <DimRows>
      <DimRow>
        <DimButtons names={["xSmall"]} tone="light" />
      </DimRow>
      <DimRow>
        <DimButton $wide $tone="light" aria-label="table">
          <Icon name="tablePen" size={10} />
          <Icon name="caret" size={8} />
        </DimButton>
      </DimRow>
    </DimRows>
    <DimRows>
      <DimRow>
        <DimButtons names={["xPill"]} tone="light" />
        <Icon name="caretLight" size={6} />
      </DimRow>
      <DimRow>
        <DimButtons names={["tableOk"]} tone="light" />
        <Icon name="caretLight" size={6} />
      </DimRow>
    </DimRows>
    <DimRows>
      <DimRow>
        <DropDown label="前缀" width={42} options={[""]} white />
        <DimButtons names={["flagPlane"]} tone="light" />
      </DimRow>
      <DimRow>
        <DropDown label="后缀" width={42} options={[""]} white />
        <DimButtons names={["origin"]} tone="light" />
      </DimRow>
    </DimRows>
  </DimBar>
);

const SketchScene = () => (
  <Scene viewBox="14 101 784 314">
    <g stroke="#4c4878" strokeWidth=".8">
      <ellipse
        cx="433.5"
        cy="239"
        rx="116"
        ry="26"
        transform="rotate(-6 433.5 239)"
        strokeDasharray="8 2 3 2"
      />
      <path d="M318 253L386 219.500 519 213 533 242 411 266.500z" />
    </g>
    <path d="M410.500 150V266" stroke="#2222c8" strokeWidth="1.3" />
    <g stroke="#d8305c" strokeWidth=".9">
      <path d="M368 228q-3 16 3 32M368 228q18-13 41 2" />
      <path d="M369 256l3 5 .6-6zM404 226l5.500 4-6-.5z" fill="#d8305c" />
    </g>
    <text
      x="367"
      y="225"
      transform="rotate(-35 367 225)"
      fill="#c23a5c"
      fontSize="9"
      fontFamily="Liberation Sans, sans-serif"
    >
      [3]°
    </text>
    <circle cx="395" cy="261" r="3" fill="#5a8a34" stroke="#3f7a28" />
    <path d="M393.500 261h3M395 259.500v3" stroke="#d8a040" />
    <path d="M433 238L431.500 220" stroke="#3ade2e" strokeWidth="1.5" />
    <path d="M429.500 222l1.500-7 2.500 7z" fill="#3ade2e" />
    <path d="M434 238l6-3" stroke="#d41f12" strokeWidth="1.8" />
    <path d="M438 233l8-1-4 5z" fill="#d41f12" />
    <path d="M434 239.500h14" stroke="#0c14cc" strokeWidth="1.5" />
    <path d="M447 237l8 2.500-8 2.500z" fill="#0c14cc" />
    <circle cx="433" cy="238.500" r="2.600" fill="#f3e23c" />
    {/* view cube */}
    <g stroke="#a8a8a8" strokeWidth=".7">
      <path d="M746 371.500L757 366.500 782 366 772 373z" fill="#eeeeee" />
      <path d="M746 371.500L772 373V399L749 397z" fill="#f7f7f7" />
      <path d="M772 373L782 366V393L772 399z" fill="#e4e4e4" />
    </g>
    <text
      x="757"
      y="378"
      transform="rotate(90 757 378)"
      fill="#555"
      fontSize="6"
      fontFamily="Liberation Sans, sans-serif"
    >
      LEFT
    </text>
    <path d="M765 381v-11" stroke="#5fe04f" />
    <path d="M766 381l5-2.500" stroke="#e05a50" />
    <path d="M766 382h10" stroke="#4c50d0" strokeWidth="1.2" />
    <path d="M775 379l4 3-4 3z" fill="#666a9c" />
    <circle cx="765.500" cy="381.500" r="1.500" fill="#e0cf4a" />
  </Scene>
);

export default function App() {
  return (
    <>
      <GlobalStyle />
      <Window>
        <TopBar />
        <RibbonBar />
        <CommandRow>
          <CommandBar>
            <Grip />
            {commands.map(({ icon, text, on }) => (
              <Command key={text} $on={on}>
                <Icon name={icon} size={7} />
                {text}
              </Command>
            ))}
          </CommandBar>
        </CommandRow>
        <Workspace>
          <Sidebar>
            {sideTop.map((name) => (
              <SideButton key={name} aria-label={name}>
                <Icon name={name} size={10} />
              </SideButton>
            ))}
            <SideTab>
              <Icon name="feature" size={10} />
              <SideText>特征库</SideText>
            </SideTab>
            {sideBottom.map((name) => (
              <SideButton key={name} aria-label={name}>
                <Icon name={name} size={10} />
              </SideButton>
            ))}
          </Sidebar>
          <Main>
            <DocRow>
              <DocTab>
                <Icon name="part" />
                零件1
                <button aria-label="close">
                  <Icon name="closeDark" size={6} />
                </button>
              </DocTab>
              <DocNav>
                {["navLeft", "navRight", "navDown", "close"].map((name) => (
                  <button key={name} aria-label={name}>
                    <Icon name={name} size={5} />
                  </button>
                ))}
              </DocNav>
            </DocRow>
            <Canvas>
              <SketchScene />
              <FeatureTree />
              <FinishButton aria-label="finish">
                <Icon name="checkPen" size={13} />
              </FinishButton>
              <DimensionBar />
            </Canvas>
          </Main>
        </Workspace>
      </Window>
    </>
  );
}
